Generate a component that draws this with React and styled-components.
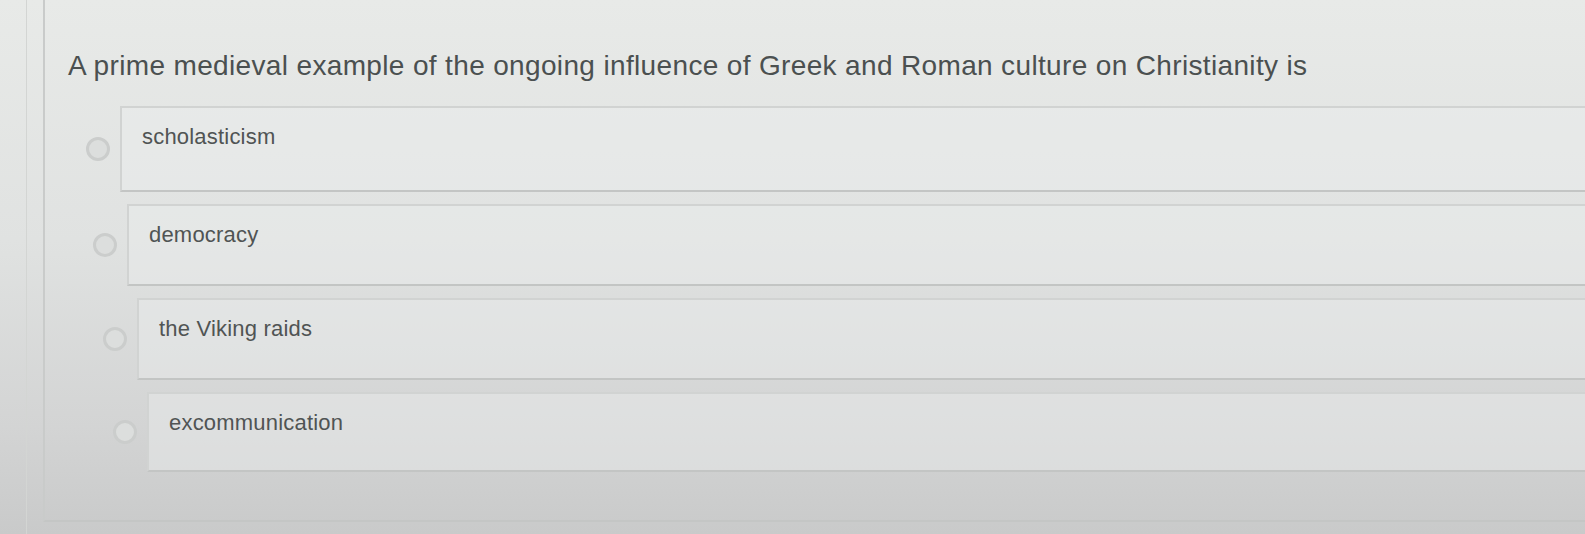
import React from "react";
import styled, { createGlobalStyle } from "styled-components";

const Global = createGlobalStyle`
  html, body {
    margin: 0;
    padding: 0;
    width: 100%;
    height: 100%;
    overflow: hidden;
  }
  body {
    background: linear-gradient(180deg, #e8eae8 0%, #e0e2e1 45%, #d3d4d4 80%, #c9caca 100%);
    font-family: "Liberation Sans", Arial, sans-serif;
  }
`;

const Page = styled.div`
  width: 1585px;
  height: 534px;
  box-sizing: border-box;
  padding-left: 26px;
  display: flex;
`;

const Frame = styled.div`
  flex: 1;
  display: flex;
  border-left: 1px solid #d3d5d3;
  padding-left: 16px;
`;

const Card = styled.section`
  flex: 1;
  height: 522px;
  box-sizing: border-box;
  border-left: 2px solid #c9cbca;
  border-bottom: 2px solid #c4c6c5;
  padding: 51px 0 0 23px;
  display: flex;
  flex-direction: column;
`;

const Question = styled.h2`
  margin: 0 0 25px;
  font-size: 28px;
  font-weight: 400;
  line-height: 30px;
  color: #4b5050;
  letter-spacing: 0.35px;
`;

const Options = styled.div`
  display: flex;
  flex-direction: column;
  gap: 12px;
`;

const Row = styled.label`
  display: flex;
  align-items: center;
  padding-left: ${(p) => p.$shift}px;
  gap: 10px;
`;

const Radio = styled.span`
  flex: none;
  width: 24px;
  height: 24px;
  border-radius: 50%;
  border: 3px solid #cbcdcc;
  background: #dcdedd;
  box-sizing: border-box;
`;

const Choice = styled.div`
  flex: 1;
  height: ${(p) => p.$h}px;
  box-sizing: border-box;
  border: 2px solid #d1d3d2;
  border-right: none;
  border-bottom-color: #c3c5c4;
  background: rgba(236, 238, 237, 0.45);
  padding: 16px 0 0 20px;
  font-size: 22px;
  letter-spacing: 0.2px;
  color: #505454;
`;

const options = [
  { text: "scholasticism", shift: 18, h: 86 },
  { text: "democracy", shift: 25, h: 82 },
  { text: "the Viking raids", shift: 35, h: 82 },
  { text: "excommunication", shift: 45, h: 80 },
];

export default function App() {
  return (
    <>
      <Global />
      <Page>
        <Frame>
          <Card>
            <Question>
              A prime medieval example of the ongoing influence of Greek and Roman culture on Christianity is
            </Question>
            <Options>
              {options.map((o) => (
                <Row key={o.text} $shift={o.shift}>
                  <Radio />
                  <Choice $h={o.h}>{o.text}</Choice>
                </Row>
              ))}
            </Options>
          </Card>
        </Frame>
      </Page>
    </>
  );
}
